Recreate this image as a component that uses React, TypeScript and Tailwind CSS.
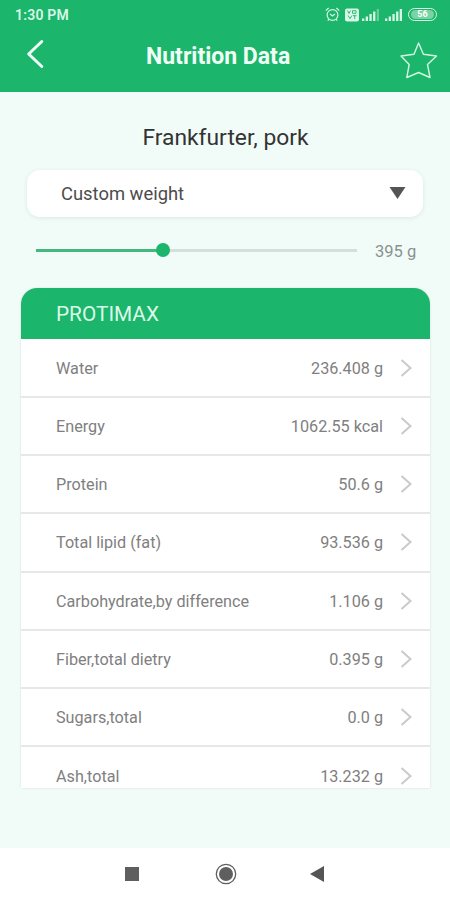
interface Nutrient {
  name: string;
  value: string;
}

const NUTRIENTS: Nutrient[] = [
  { name: 'Water', value: '236.408 g' },
  { name: 'Energy', value: '1062.55 kcal' },
  { name: 'Protein', value: '50.6 g' },
  { name: 'Total lipid (fat)', value: '93.536 g' },
  { name: 'Carbohydrate,by difference', value: '1.106 g' },
  { name: 'Fiber,total dietry', value: '0.395 g' },
  { name: 'Sugars,total', value: '0.0 g' },
  { name: 'Ash,total', value: '13.232 g' },
];

const MAX_WEIGHT = 1000;

function AlarmIcon() {
  return (
    <svg width="15" height="15" viewBox="0 0 15 15" fill="none" stroke="currentColor" strokeWidth="1.2">
      <circle cx="7.5" cy="8" r="5.4" />
      <path d="M0.8 3.6 3.6 1M14.2 3.6 11.4 1M3.8 12.3 2.8 13.7M11.2 12.3l1 1.4" />
      <path d="M5 7l2.5 2L10 7" />
    </svg>
  );
}

function VolteIcon() {
  return (
    <svg width="14" height="14" viewBox="0 0 14 14">
      <rect width="14" height="13" y="0.5" rx="2" fill="currentColor" />
      <path
        d="M2.5 2.5l1.5 3 1.5-3M7.5 2.7h3.5v2.6H7.5zM3 7.5l2 3 2-3M8 7.7h3.5M9.7 7.7V11"
        fill="none"
        stroke="#1bb56b"
        strokeWidth="0.9"
      />
    </svg>
  );
}

function SignalIcon({ weak = false }: { weak?: boolean }) {
  return (
    <svg width="17" height="12" viewBox="0 0 17 12" fill="currentColor">
      <rect x="0" y="9.5" width="2.3" height="2.5" />
      <rect x="3.7" y="7.5" width="2.3" height="4.5" />
      <rect x="7.4" y="5" width="2.3" height="7" />
      <rect x="11.1" y="2.5" width="2.3" height="9.5" />
      <rect x="14.7" y="0" width="2.3" height="12" opacity={weak ? 0.4 : 1} />
    </svg>
  );
}

function StatusBar() {
  return (
    <div className="flex h-[29px] items-center justify-between pl-[15px] pr-[13px] text-[#d9f8e6]">
      <span className="text-[14px] font-semibold leading-none tracking-[0.2px]">1:30 PM</span>
      <div className="flex items-center">
        <AlarmIcon />
        <span className="ml-[5px]">
          <VolteIcon />
        </span>
        <span className="ml-[3px]">
          <SignalIcon weak />
        </span>
        <span className="ml-[6px]">
          <SignalIcon />
        </span>
        <span className="ml-[6px] flex h-[13px] w-[29px] items-center justify-center rounded-full border-[1.5px] border-[#d9f8e6]">
          <span className="flex h-[9px] w-[23px] items-center justify-center rounded-full bg-[#79d3a4] text-[9px] font-bold leading-none text-white">
            56
          </span>
        </span>
      </div>
    </div>
  );
}

function Header() {
  return (
    <header className="h-[92px] bg-[#1bb56b]">
      <StatusBar />
      <div className="flex h-[63px] items-start pl-[26px] pr-[12px]">
        <svg
          className="mt-[10px]"
          width="19"
          height="30"
          viewBox="0 0 19 30"
          fill="none"
          stroke="#effff6"
          strokeWidth="3"
          strokeLinecap="round"
          strokeLinejoin="round"
        >
          <path d="M15.8 2.5 2.7 15l13.1 12.5" />
        </svg>
        <h1 className="ml-[101px] mt-[13px] text-[23px] font-bold leading-[30px] text-[#effff6]">Nutrition Data</h1>
        <svg
          className="ml-auto mt-[12px]"
          width="38"
          height="38"
          viewBox="0 0 38 38"
          fill="none"
          stroke="#d3f7e2"
          strokeWidth="1.4"
          strokeLinejoin="round"
        >
          <path d="M18.6 2 23.4 13.3 36.5 15 27.5 23.5 30 36.5 18.6 31.5 6.8 36.5 9.2 23.5 1 15 14 13.3z" />
        </svg>
      </div>
    </header>
  );
}

function WeightSelect() {
  return (
    <div className="mx-[27px] mt-[17px] flex h-[47px] items-center justify-between rounded-[13px] bg-white pl-[34px] pr-[17px] shadow-[0_1px_4px_rgba(0,60,40,0.1)]">
      <span className="mt-px text-[18.4px] leading-[26px] text-[#4c4c4c]">Custom weight</span>
      <svg className="-mt-[2px]" width="17" height="12" viewBox="0 0 17 12" fill="#555555">
        <path d="M0.5 0h16l-8 12z" />
      </svg>
    </div>
  );
}

function WeightSlider({ weight }: { weight: number }) {
  const percent = `${(weight / MAX_WEIGHT) * 100}%`;

  return (
    <div className="mt-[21px] flex h-[24px] items-center pl-[36px]">
      <div className="relative h-[3px] w-[321px] bg-[#d5dfdb]">
        <div className="h-full bg-[#45b880]" style={{ width: percent }} />
        <div
          className="absolute top-1/2 size-[14px] -translate-x-1/2 -translate-y-1/2 rounded-full bg-[#1bb56b]"
          style={{ left: percent }}
        />
      </div>
      <span className="ml-[18px] mt-[4px] text-[16.5px] leading-none text-[#8a918e]">{weight} g</span>
    </div>
  );
}

function NutrientRow({ name, value }: Nutrient) {
  return (
    <li className="flex h-[58.3px] shrink-0 items-center border-b-2 border-[#e6e7e7] pl-[35px] pr-[18px] text-[16.2px] text-[#808080]">
      <span className="mt-[2.4px]">{name}</span>
      <span className="ml-auto mt-[2.4px]">{value}</span>
      <svg className="ml-[17px]" width="12" height="18" viewBox="0 0 12 18" fill="none" stroke="#cacaca" strokeWidth="2">
        <path d="M1.5 1 10.5 9l-9 8" />
      </svg>
    </li>
  );
}

function NavigationBar() {
  return (
    <nav className="flex h-[52px] items-center bg-white pl-[125px]">
      <span className="size-[14px] bg-[#5f5f5f]" />
      <svg className="ml-[76px]" width="22" height="22" viewBox="0 0 22 22">
        <circle cx="11" cy="11" r="9.7" fill="none" stroke="#5f5f5f" strokeWidth="1.3" />
        <circle cx="11" cy="11" r="7" fill="#5f5f5f" />
      </svg>
      <svg className="ml-[73px]" width="14" height="16" viewBox="0 0 14 16" fill="#555555">
        <path d="M14 0v16L0 8z" />
      </svg>
    </nav>
  );
}

export default function App() {
  return (
    <div className="flex h-[900px] w-[450px] flex-col overflow-hidden bg-[#f1fcf8] font-['Roboto',sans-serif]">
      <Header />

      <main className="flex flex-1 flex-col">
        <h2 className="mt-[31px] pl-px text-center text-[22.8px] leading-[30px] text-[#333333]">Frankfurter, pork</h2>
        <WeightSelect />
        <WeightSlider weight={395} />

        <section className="ml-[21px] mr-[20px] mt-[26px] flex h-[500px] flex-col overflow-hidden rounded-t-[16px] bg-white shadow-[0_0_2px_rgba(0,0,0,0.15)]">
          <h3 className="h-[51px] shrink-0 bg-[#1bb56b] pl-[35px] text-[20.8px] leading-[53px] text-[#dcfae9]">PROTIMAX</h3>
          <ul className="pt-[0.4px]">
            {NUTRIENTS.map((nutrient) => (
              <NutrientRow key={nutrient.name} {...nutrient} />
            ))}
          </ul>
        </section>
      </main>

      <NavigationBar />
    </div>
  );
}
